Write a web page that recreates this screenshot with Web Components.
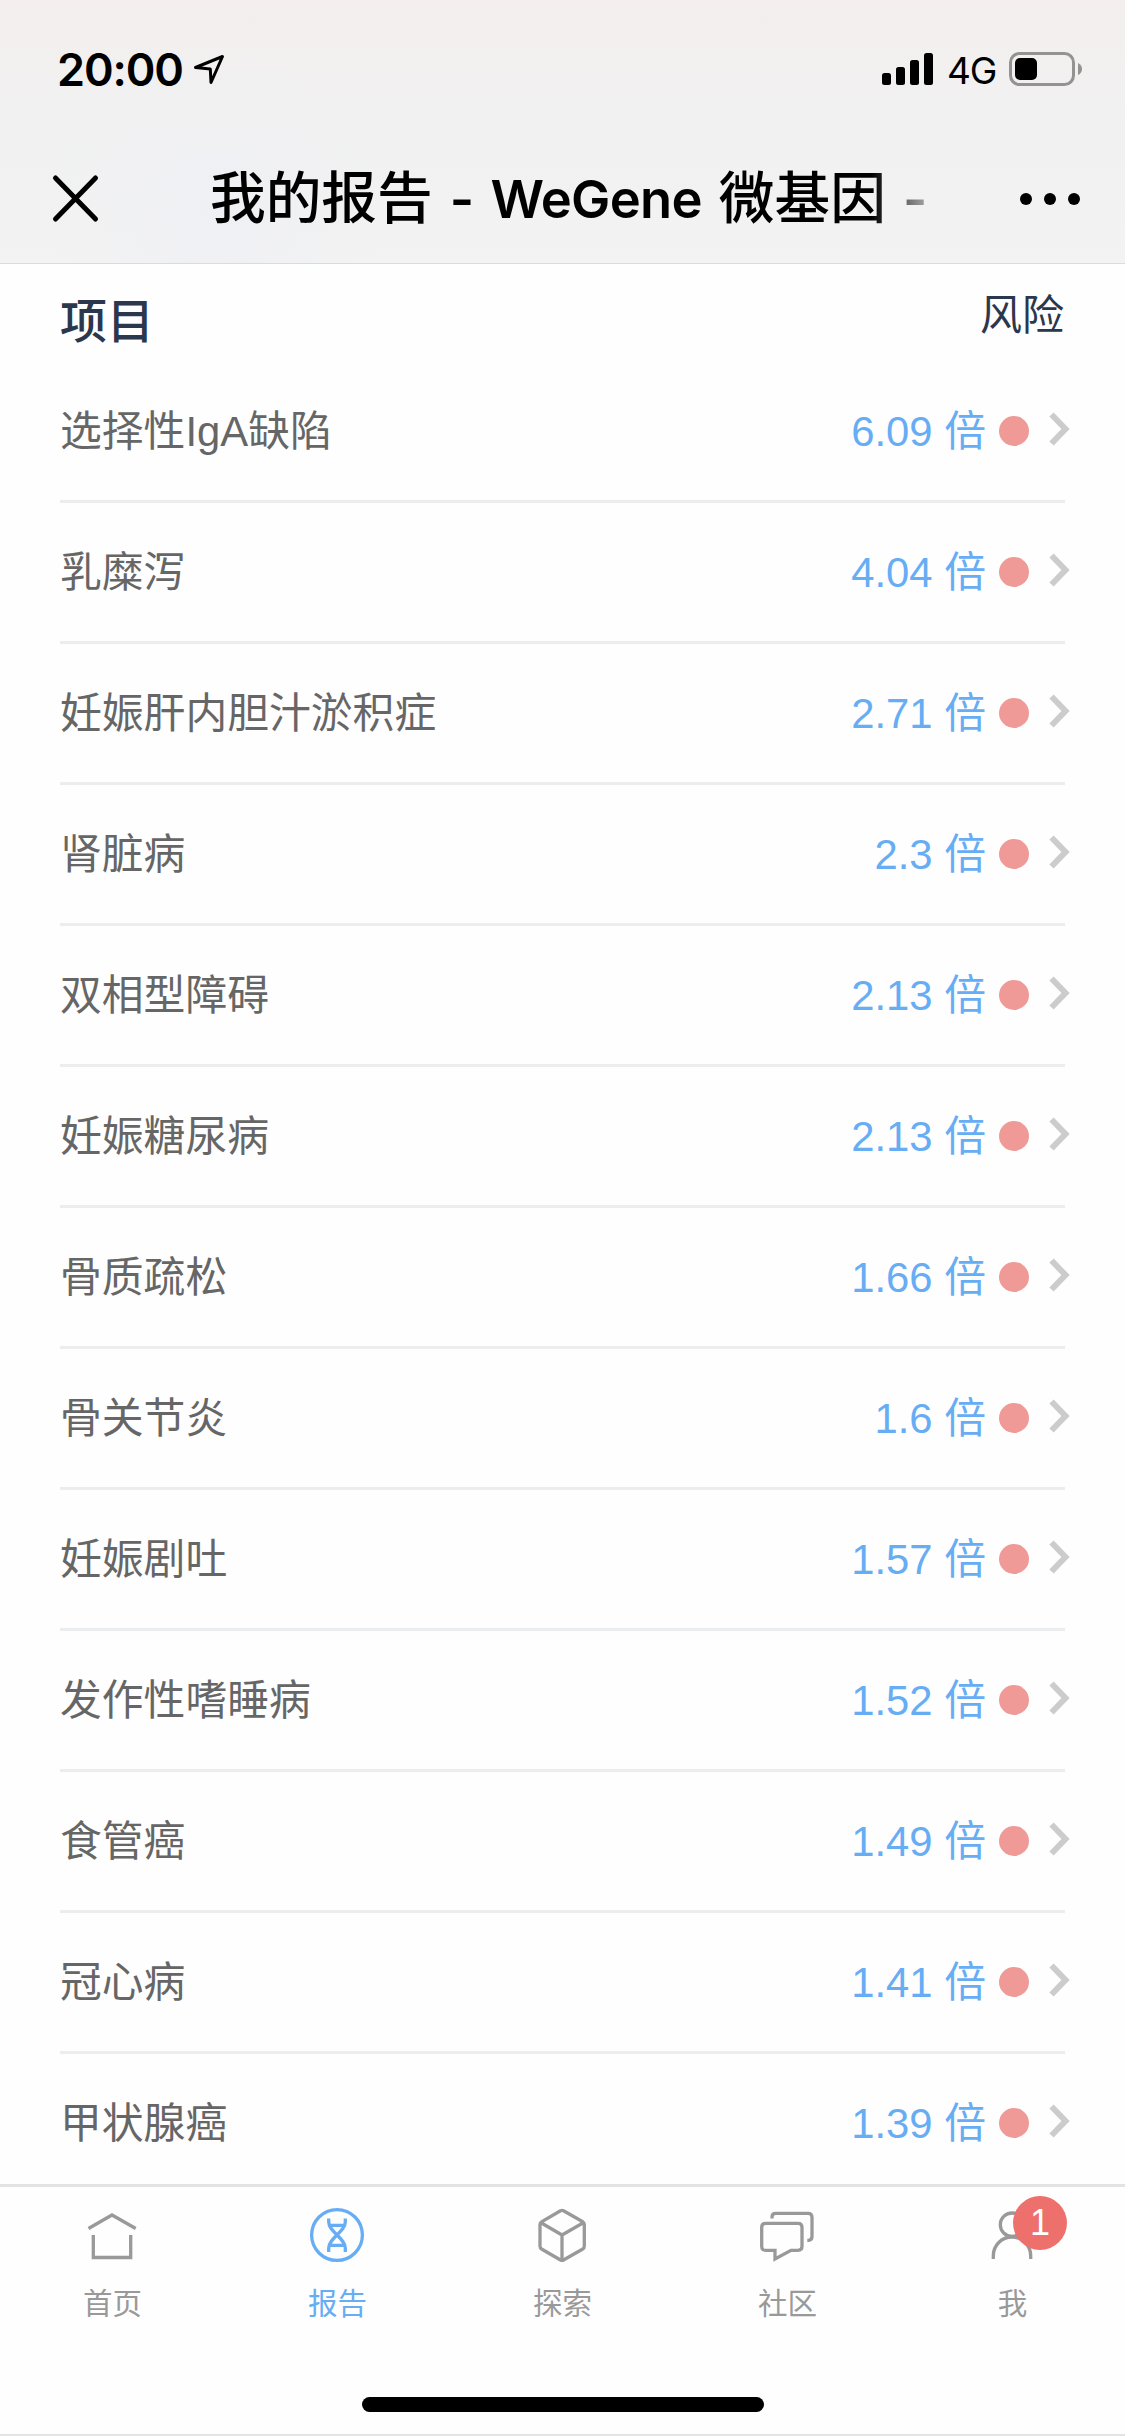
<!DOCTYPE html>
<html lang="zh-CN">
<head>
<meta charset="utf-8">
<title>我的报告 - WeGene 微基因</title>
<meta name="viewport" content="width=device-width, initial-scale=1.0">
<style>
* { box-sizing: border-box; }
body {
    margin: 0;
    background: #fefefe;
    font-family: "Liberation Sans", "Noto Sans CJK SC", sans-serif;
}
</style>
</head>
<body>
<report-app>
    <top-bar slot="top">
        <status-bar slot="status" time="20:00" network="4G"></status-bar>
        我的报告<span> - WeGene </span>微基因<span> -</span>
    </top-bar>
    <risk-list></risk-list>
    <tab-bar slot="tabs">
        <tab-item icon="home">首页</tab-item>
        <tab-item icon="report" active>报告</tab-item>
        <tab-item icon="explore">探索</tab-item>
        <tab-item icon="community">社区</tab-item>
        <tab-item icon="me" badge="1">我</tab-item>
    </tab-bar>
</report-app>
<script>
class Base extends HTMLElement {
    constructor() {
        super();
        this.shadow = this.attachShadow( {mode: 'open'} );
    }
    connectedCallback() {
        this.shadow.innerHTML = `<style>*{box-sizing:border-box}${this.css()}</style>${this.html()}`;
    }
}

customElements.define('report-app', class extends Base {
    css() { return `
        :host { display: grid; grid-template-rows: 264px 1920px 252px; width: 1125px; height: 2436px; overflow: hidden; }
        main { overflow: hidden; padding: 0 60px; }`; }
    html() { return `<slot name="top"></slot><main><slot></slot></main><slot name="tabs"></slot>`; }
});

customElements.define('status-bar', class extends Base {
    css() { return `
        :host { display: flex; align-items: center; height: 138px; padding: 0 42px 0 57px; color: #000; font-family: Inter, sans-serif; }
        .time { font-size: 45px; font-weight: 600; letter-spacing: -1.1px; width: 136px; white-space: nowrap; }
        .arrow { margin-right: auto; }
        .bars { margin-right: 13px; }
        .net { font-size: 37px; width: 62px; letter-spacing: -1.2px; padding-top: 2px; }`; }
    html() { return `
        <span class="time">${this.getAttribute('time')}</span>
        <svg class="arrow" width="32" height="32" viewBox="0 0 32 32" fill="none" stroke="#000" stroke-width="3" stroke-linejoin="round"><path d="M29.5 3.5 L2.5 14.5 L17.3 16 L18 29.5 Z"/></svg>
        <svg class="bars" width="52" height="34" viewBox="0 0 52 34"><rect y="21" width="9" height="12" rx="2.5"/><rect x="14" y="15" width="9" height="18" rx="2.5"/><rect x="28" y="8" width="9" height="25" rx="2.5"/><rect x="42" y="1" width="9" height="32" rx="2.5"/></svg>
        <span class="net">${this.getAttribute('network')}</span>
        <svg width="74" height="34" viewBox="0 0 74 34"><rect x="1.5" y="1.5" width="63" height="31" rx="9" fill="none" stroke="#949292" stroke-width="3"/><rect x="6" y="6" width="22" height="22" rx="5"/><path d="M69 11 Q73 13 73 17 Q73 21 69 23 Z" fill="#949292"/></svg>`; }
});

customElements.define('top-bar', class extends Base {
    css() { return `
        :host {
            display: flex; flex-direction: column; height: 264px;
            background:
                radial-gradient(circle 170px at 215px 215px, #eff0f4, #eff0f400),
                linear-gradient(#f4eeee, #f2f0f0 30%, #f1f1f1 55%, #f3f3f3);
            border-bottom: 1px solid #dadbdb;
        }
        nav { display: flex; align-items: center; height: 121px; padding: 0 42px 0 50px; }
        h1 {
            margin: 0 auto 0 109px; width: 727px; overflow: hidden;
            font: 500 55.7px/80px Inter, "Noto Sans CJK SC", sans-serif; white-space: nowrap;
            -webkit-mask-image: linear-gradient(90deg, #000 91%, transparent 102%);
            mask-image: linear-gradient(90deg, #000 91%, transparent 102%);
        }
        ::slotted(span) { font-size: 52.5px; font-weight: 600; letter-spacing: -0.7px; word-spacing: 4.5px; }`; }
    html() { return `
        <slot name="status"></slot>
        <nav>
            <svg width="51" height="51" viewBox="0 0 51 51" stroke="#000" stroke-width="5" stroke-linecap="round"><path d="M5.5 5 L45.5 46 M45.5 5 L5.5 46"/></svg>
            <h1><slot></slot></h1>
            <svg width="64" height="14" viewBox="0 0 64 14"><circle cx="7" cy="7" r="6"/><circle cx="31" cy="7" r="6"/><circle cx="55" cy="7" r="6"/></svg>
        </nav>`; }
});

customElements.define('risk-row', class extends Base {
    css() { return `
        :host {
            display: flex; align-items: center; height: 141px; border-bottom: 3px solid #ebedef;
            font-size: 41.8px; line-height: 60px; color: #666; white-space: nowrap;
        }
        span { padding-top: 2px; }
        .name { flex: 1; }
        .risk { color: #67adf4; }
        i { width: 30px; height: 30px; border-radius: 50%; background: #ef9a97; margin: 0 20px 0 13px; }
        svg { margin: -4px -5px 0 0; }`; }
    html() { return `
        <span class="name"><slot></slot></span>
        <span class="risk">${this.getAttribute('risk')} 倍</span>
        <i></i>
        <svg width="21" height="34" viewBox="0 0 21 34" fill="none" stroke="#ccc" stroke-width="6"><path d="M2.5 2.5 L16.5 17 L2.5 31.5"/></svg>`; }
});

const risks = [
    ['选择性IgA缺陷', '6.09'], ['乳糜泻', '4.04'], ['妊娠肝内胆汁淤积症', '2.71'],
    ['肾脏病', '2.3'], ['双相型障碍', '2.13'], ['妊娠糖尿病', '2.13'],
    ['骨质疏松', '1.66'], ['骨关节炎', '1.6'], ['妊娠剧吐', '1.57'],
    ['发作性嗜睡病', '1.52'], ['食管癌', '1.49'], ['冠心病', '1.41'], ['甲状腺癌', '1.39']
];
customElements.define('risk-list', class extends Base {
    css() { return `
        :host { display: block; }
        header { display: flex; justify-content: space-between; height: 98px; color: #2b374d; }
        b { font-size: 47px; font-weight: 500; line-height: 60px; padding-top: 28px; }
        span { font-size: 42px; line-height: 60px; padding: 22px 1px 0 0; }`; }
    html() { return `<header><b>项目</b><span>风险</span></header>` +
        risks.map( ([n,r]) => `<risk-row risk="${r}">${n}</risk-row>` ).join(''); }
});

const icons = {
    home: '<path d="M6.5 23.5 L30 10 L53.7 23.5 M11.3 30 V52.5 H48.7 V30"/>',
    report: '<circle cx="30" cy="30" r="25.4"/><path d="M21.7 13.5 V17 C21.7 27 38.3 33 38.3 43 V47 M38.3 13.5 V17 C38.3 27 21.7 33 21.7 43 V47 M23.5 20.4 H36.5 M23.5 40.4 H36.5"/>',
    explore: '<path stroke-linejoin="round" d="M28.5 5.8 Q30 5 31.5 5.8 L50.8 16.8 Q52.3 17.7 52.3 19.5 V41 Q52.3 43 50.8 44 L31.5 55 Q30 55.8 28.5 55 L9.5 44 Q8 43 8 41 V19.5 Q8 17.7 9.5 16.8 Z M9 17.8 L30 30 L51.3 17.8 M30 30 V55"/>',
    community: '<path d="M8.7 18.3 H41 Q45 18.3 45 22.3 V41.3 Q45 45.3 41 45.3 H34 L18 54 V45.3 H8.7 Q4.7 45.3 4.7 41.3 V22.3 Q4.7 18.3 8.7 18.3 Z M15 13.5 V12 Q15 8.3 18.7 8.3 H51 Q55 8.3 55 12.3 V31.5 Q55 35.3 51.5 35.3 H50.3"/>',
    me: '<circle cx="30" cy="19.7" r="11.7"/><path d="M11.3 54 V50.7 A18.7 18.7 0 0 1 48.7 50.7 V54"/>'
};
customElements.define('tab-item', class extends Base {
    css() { return `
        :host { position: relative; display: flex; flex-direction: column; align-items: center; color: #999; padding-top: 18px; }
        :host([active]) { color: #67adf4; }
        span { font-size: 29.5px; line-height: 44px; margin-top: 16px; }
        em {
            position: absolute; left: 113px; top: 9px; width: 54px; height: 54px; border-radius: 50%;
            background: #ed706d; color: #fff; font: 36px/54px "Liberation Sans", sans-serif; text-align: center;
        }`; }
    html() {
        const badge = this.getAttribute('badge');
        return `
        <svg width="61" height="61" viewBox="0 0 61 61" fill="none" stroke="currentColor" stroke-width="3.3">${icons[this.getAttribute('icon')]}</svg>
        <span><slot></slot></span>${badge ? `<em>${badge}</em>` : ''}`;
    }
});

customElements.define('tab-bar', class extends Base {
    css() { return `
        :host { display: flex; flex-direction: column; align-items: center; height: 252px; background: #fefefe; border-top: 3px solid #e3e3e3; border-bottom: 2px solid #e3e3e3; }
        nav { display: grid; grid-template-columns: repeat(5, 225px); height: 210px; }
        .home { width: 402px; height: 15px; border-radius: 8px; background: #000; }`; }
    html() { return `<nav><slot></slot></nav><div class="home"></div>`; }
});
</script>
</body>
</html>
